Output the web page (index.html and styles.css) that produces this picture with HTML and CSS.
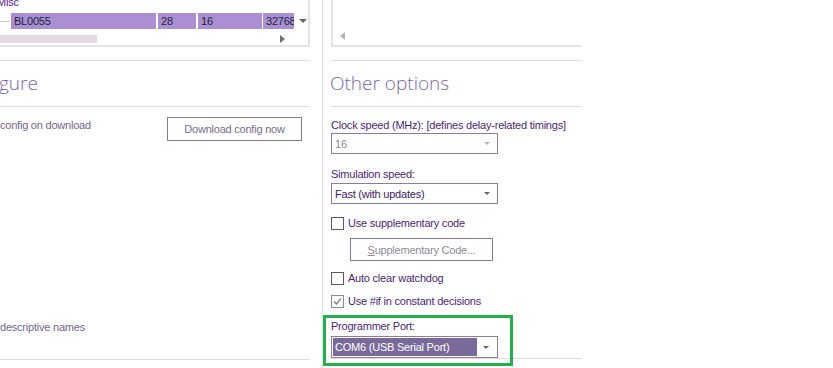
FILE: index.html
```html
<!DOCTYPE html>
<html>
<head>
<meta charset="utf-8">
<link rel="stylesheet" href="styles.css">
</head>
<body>
<div class="page">
  <div class="left">
    <div class="listbox">
      <div class="misc">Misc</div>
      <div class="datarow">
        <div class="tree"></div>
        <div class="cell c1">BL0055</div>
        <div class="cell c2">28</div>
        <div class="cell c3">16</div>
        <div class="cell c4">32768</div>
        <div class="ddarrow"></div>
      </div>
      <div class="hscroll">
        <div class="thumb"></div>
        <div class="rarrow"></div>
      </div>
    </div>
    <div class="hline gap-top"></div>
    <div class="heading">gure</div>
    <div class="hline"></div>
    <div class="optrow">
      <span class="dim">config on download</span>
      <button class="btn dlbtn">Download config now</button>
    </div>
    <div class="spacer"></div>
    <div class="dim lastlabel">descriptive names</div>
    <div class="hline lastline"></div>
  </div>
  <div class="divider"></div>
  <div class="right">
    <div class="listbox2">
      <div class="larrow"></div>
    </div>
    <div class="hline gap-top"></div>
    <div class="heading">Other options</div>
    <div class="hline"></div>
    <div class="label l-clock">Clock speed (MHz): [defines delay-related timings]</div>
    <div class="combo disabled"><span class="val">16</span><i class="arr"></i></div>
    <div class="label l-sim">Simulation speed:</div>
    <div class="combo sim"><span class="val">Fast (with updates)</span><i class="arr"></i></div>
    <label class="check c-supp"><span class="box"></span>Use supplementary code</label>
    <button class="btn suppbtn"><u>S</u>upplementary Code...</button>
    <label class="check c-auto"><span class="box"></span>Auto clear watchdog</label>
    <label class="check c-if"><span class="box checked"><svg width="9" height="9" viewBox="0 0 9 9"><path d="M1 4.5 L3.5 7 L8 1.5" fill="none" stroke="#7a7a7a" stroke-width="1.2"/></svg></span>Use #if in constant decisions</label>
    <div class="label l-port">Programmer Port:</div>
    <div class="combo selected"><span class="val">COM6 (USB Serial Port)</span><i class="arr"></i></div>
    <div class="hline bottomline"></div>
    <div class="highlight"></div>
  </div>
</div>
</body>
</html>
```

FILE: styles.css
```css
* { box-sizing: border-box; }
html, body { margin: 0; padding: 0; background: #fff; }
body {
  width: 833px; height: 368px; overflow: hidden;
  font-family: "Liberation Sans", Arial, sans-serif;
  font-size: 11px;
  letter-spacing: -0.22px;
  color: #4b1f73;
}
.page { display: flex; height: 368px; }
.left { width: 310px; display: flex; flex-direction: column; }
.divider { width: 1px; margin-left: 12px; margin-right: 8px; background: #e3e0e3; }
.right { width: 251px; display: flex; flex-direction: column; position: relative; }

.listbox {
  height: 47px; width: 310px;
  border-right: 2px solid #e4e4e4; border-bottom: 2px solid #e4e4e4;
  position: relative; overflow: hidden;
}
.misc { margin-top: -4px; margin-left: -3px; height: 17px; line-height: 13px; color: #5b1a8c; }
.datarow { display: flex; height: 16px; gap: 1px; align-items: stretch; }
.tree { width: 10px; border-top: 1px solid #c8c8c8; margin-top: 8px; border-left: 1px solid #c8c8c8; height: 0; }
.cell { background: #aa8fd3; color: #1f1f3a; line-height: 16px; padding-left: 3px; overflow: hidden; white-space: nowrap; }
.c1 { width: 145px; }
.c2 { width: 38px; margin-left: 1px; }
.c3 { width: 64px; margin-left: 1px; }
.c4 { width: 31px; }
.ddarrow { width: 0; height: 0; border-left: 4px solid transparent; border-right: 4px solid transparent; border-top: 4px solid #666; margin: 6px 0 0 4px; }
.hscroll { display: flex; align-items: center; height: 12px; margin-top: 4px; }
.thumb { width: 97px; height: 8px; background: #e3dbe1; }
.rarrow { width: 0; height: 0; border-top: 4px solid transparent; border-bottom: 4px solid transparent; border-left: 5px solid #6e6e6e; margin-left: 183px; }

.listbox2 {
  height: 47px; border-left: 2px solid #e4e4e4; border-bottom: 2px solid #e4e4e4;
  display: flex; align-items: flex-end; padding: 0 0 5px 7px;
}
.larrow { width: 0; height: 0; border-top: 4px solid transparent; border-bottom: 4px solid transparent; border-right: 5px solid #b5b5b5; }

.hline { height: 1px; background: #e0dce0; flex: none; }
.gap-top { margin-top: 13px; }
.heading {
  height: 45px; font-family: "Open Sans", sans-serif; font-weight: 300; font-size: 19px;
  letter-spacing: 0; color: #7b68a3; line-height: 45px; margin-left: -1px;
}
.dim { color: #75668a; }
.optrow { display: flex; justify-content: space-between; align-items: flex-start; height: 36px; padding-top: 11px; padding-right: 8px; }
.optrow .dim { line-height: 14px; }
.btn {
  font-family: "Liberation Sans", Arial, sans-serif; font-size: 11px; letter-spacing: -0.22px;
  background: #fff; border: 1px solid #8a7796; color: #7a6b8c; padding: 0;
}
.dlbtn { width: 135px; height: 24px; margin-top: -1px; }
.spacer { flex: 1; }
.lastlabel { line-height: 14px; margin-bottom: 25px; }
.lastline { margin-bottom: 8px; }

.label { line-height: 14px; }
.l-clock { margin-top: 11px; }
.combo {
  width: 167px; height: 21px; border: 1px solid #8c7c9e; margin-top: 1px;
  display: flex; align-items: center; color: #3b1a60;
}
.combo .val { flex: 1; padding-left: 3px; white-space: nowrap; }
.combo .arr { width: 0; height: 0; border-left: 3px solid transparent; border-right: 3px solid transparent; border-top: 3px solid #666; margin: 0 7px 0 6px; }
.combo.disabled { color: #8a8a8a; }
.combo.disabled .arr { border-top-color: #b5b5b5; }
.l-sim { margin-top: 13px; }
.combo.sim { margin-top: 2px; }
.check { display: flex; align-items: center; line-height: 14px; color: #4b1f73; }
.check .box { width: 13px; height: 13px; border: 1px solid #5a5a5a; margin-right: 4px; display: flex; align-items: center; justify-content: center; background: #fff; }
.check .box.checked { border-color: #8a8a8a; }
.c-supp { margin-top: 12px; }
.suppbtn { width: 143px; height: 23px; margin: 8px 0 0 19px; color: #8f8a96; }
.suppbtn u { text-decoration: underline; }
.c-auto { margin-top: 10px; }
.c-if { margin-top: 9px; }
.l-port { margin-top: 11px; }
.combo.selected { height: 22px; padding: 1px; background: #fff; margin-top: 3px; }
.combo.selected .val { background: #7a6a9a; color: #fff; height: 100%; line-height: 18px; padding-left: 2px; }
.bottomline { margin-top: 0; }
.highlight {
  position: absolute; left: -8px; top: 315px; width: 190px; height: 51px;
  border: 3px solid #22b14c;
}
```
